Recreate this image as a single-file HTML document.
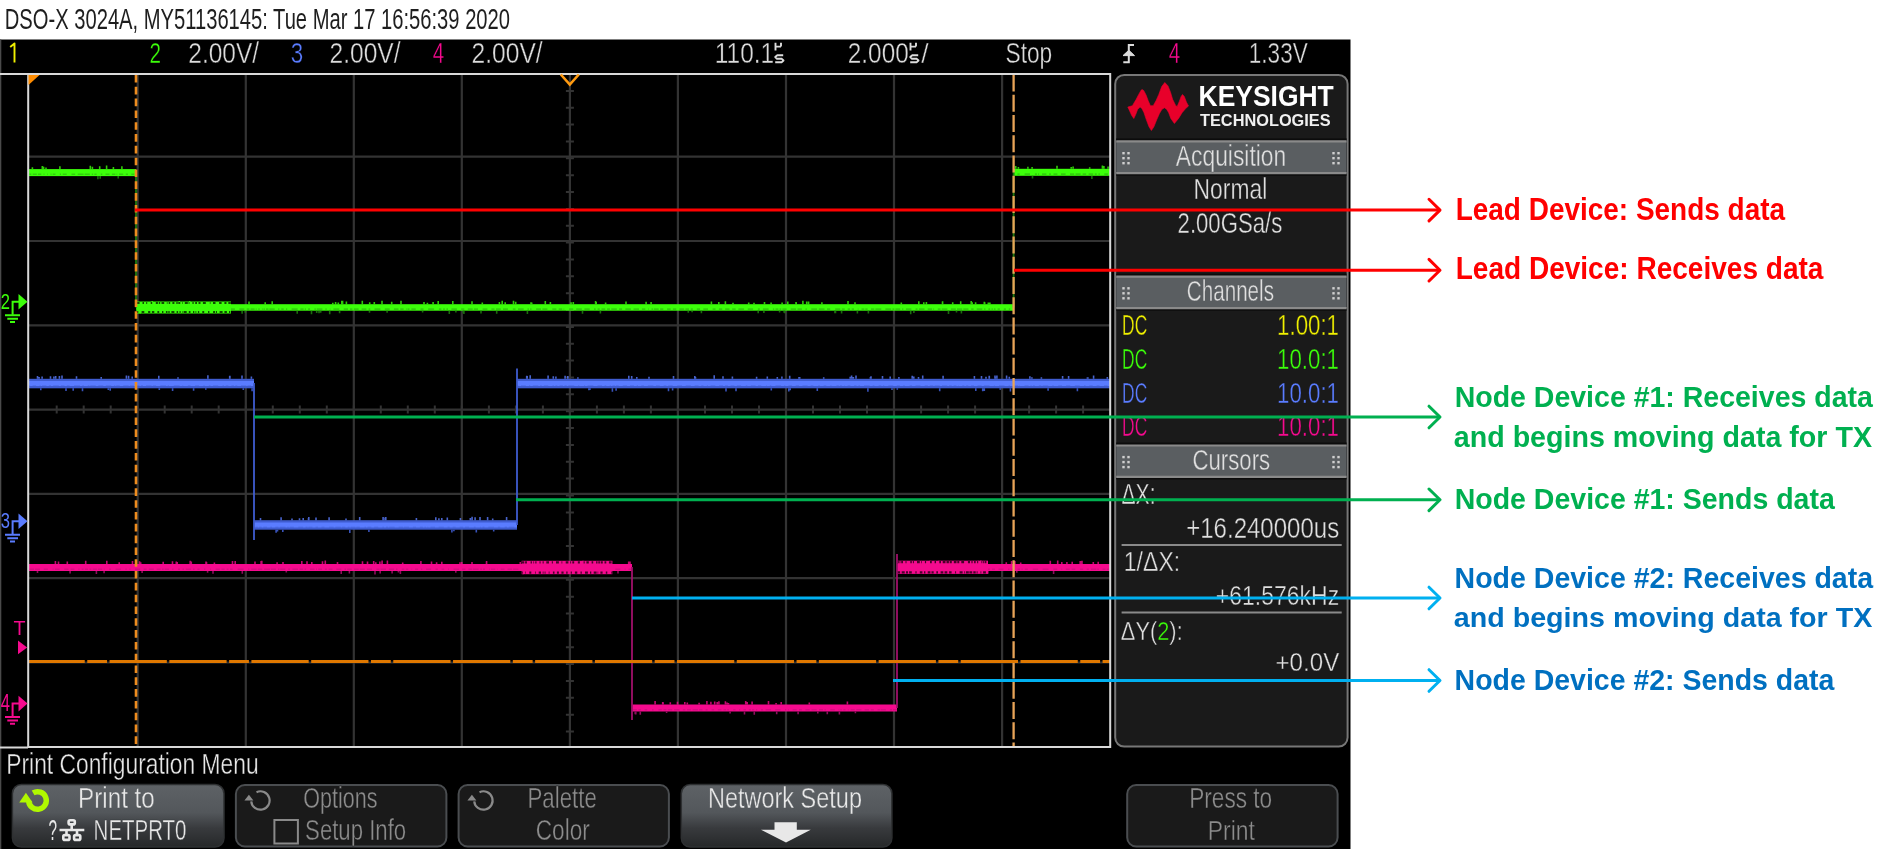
<!DOCTYPE html>
<html><head><meta charset="utf-8"><title>Scope capture</title>
<style>html,body{margin:0;padding:0;background:#fff;width:1883px;height:850px;overflow:hidden}
svg text{font-family:"Liberation Sans",sans-serif} svg{will-change:transform}</style></head>
<body>
<svg width="1883" height="850" viewBox="0 0 1883 850" style="display:block">
<rect x="0" y="0" width="1883" height="850" fill="#ffffff"/>
<text x="4.80" y="29.00" font-size="29.09" font-weight="400" fill="#1e1e1e" textLength="505.19" lengthAdjust="spacingAndGlyphs">DSO-X 3024A, MY51136145: Tue Mar 17 16:56:39 2020</text>
<rect x="0" y="39.5" width="1350.5" height="809.5" fill="#000"/>
<rect x="0" y="39.5" width="1.3" height="809.5" fill="#4a4a4a"/>
<path d="M0,74 H28 M0,747.4 H28" stroke="#d9d9d9" stroke-width="2"/>
<path d="M10.2,47 L14.5,43.4 V62.6" fill="none" stroke="#f0f000" stroke-width="1.9" stroke-linejoin="round"/>
<text x="149.60" y="63.00" font-size="29.39" font-weight="400" fill="#3cff0a" textLength="11.52" lengthAdjust="spacingAndGlyphs" stroke="#000000" stroke-width="0.4">2</text>
<text x="188.30" y="63.00" font-size="29.39" font-weight="400" fill="#dcdcdc" textLength="70.87" lengthAdjust="spacingAndGlyphs" stroke="#000000" stroke-width="0.4">2.00V/</text>
<text x="290.80" y="63.00" font-size="29.39" font-weight="400" fill="#5a7cff" textLength="12.43" lengthAdjust="spacingAndGlyphs" stroke="#000000" stroke-width="0.4">3</text>
<text x="329.60" y="63.00" font-size="29.39" font-weight="400" fill="#dcdcdc" textLength="70.97" lengthAdjust="spacingAndGlyphs" stroke="#000000" stroke-width="0.4">2.00V/</text>
<text x="432.80" y="63.00" font-size="29.82" font-weight="400" fill="#f50a8e" textLength="11.42" lengthAdjust="spacingAndGlyphs" stroke="#000000" stroke-width="0.4">4</text>
<text x="471.60" y="63.00" font-size="29.39" font-weight="400" fill="#dcdcdc" textLength="71.07" lengthAdjust="spacingAndGlyphs" stroke="#000000" stroke-width="0.4">2.00V/</text>
<text x="714.80" y="63.00" font-size="29.39" font-weight="400" fill="#dcdcdc" textLength="59.42" lengthAdjust="spacingAndGlyphs" stroke="#000000" stroke-width="0.4">110.1</text>
<text x="847.80" y="63.00" font-size="29.39" font-weight="400" fill="#dcdcdc" textLength="60.90" lengthAdjust="spacingAndGlyphs" stroke="#000000" stroke-width="0.4">2.000</text>
<path d="M775.5,42.8 V50.4 M775.5,46.6 H781.0 M781.0,42.8 V46.6 M783.2,55.3 H777.3 L775.2,57 L777.0,58.8 H781.8 L783.5,60.5 L781.8,62.2 H775.2" fill="none" stroke="#dcdcdc" stroke-width="1.9" stroke-linejoin="round"/>
<path d="M910.5,42.8 V50.4 M910.5,46.6 H916.0 M916.0,42.8 V46.6 M918.2,55.3 H912.3 L910.2,57 L912.0,58.8 H916.8 L918.5,60.5 L916.8,62.2 H910.2" fill="none" stroke="#dcdcdc" stroke-width="1.9" stroke-linejoin="round"/>
<text x="921.30" y="63.00" font-size="28.28" font-weight="400" fill="#dcdcdc" textLength="7.34" lengthAdjust="spacingAndGlyphs" stroke="#000000" stroke-width="0.4">/</text>
<text x="1005.50" y="63.00" font-size="29.39" font-weight="400" fill="#dcdcdc" textLength="46.69" lengthAdjust="spacingAndGlyphs" stroke="#000000" stroke-width="0.4">Stop</text>
<path d="M1123.3,62.2 H1128.8 V45 H1134" fill="none" stroke="#dcdcdc" stroke-width="2"/>
<path d="M1123,55.6 L1128.8,50.2 L1134.5,55.6 Z" fill="#dcdcdc" stroke="#dcdcdc" stroke-width="1"/>
<text x="1168.80" y="63.00" font-size="29.82" font-weight="400" fill="#f50a8e" textLength="11.42" lengthAdjust="spacingAndGlyphs" stroke="#000000" stroke-width="0.4">4</text>
<text x="1248.80" y="63.00" font-size="29.82" font-weight="400" fill="#dcdcdc" textLength="58.92" lengthAdjust="spacingAndGlyphs" stroke="#000000" stroke-width="0.4">1.33V</text>
<path d="M137.7,75 V746 M245.8,75 V746 M353.8,75 V746 M461.8,75 V746 M569.9,75 V746 M677.9,75 V746 M786.0,75 V746 M894.0,75 V746 M1002.1,75 V746 M29,156.7 H1110 M29,241.0 H1110 M29,325.3 H1110 M29,409.6 H1110 M29,493.9 H1110 M29,578.2 H1110 M29,662.5 H1110" stroke="#333333" stroke-width="2.2" fill="none"/>
<path d="M565.9,90.9 H573.9 M565.9,107.7 H573.9 M565.9,124.6 H573.9 M565.9,141.4 H573.9 M565.9,158.3 H573.9 M565.9,175.2 H573.9 M565.9,192.0 H573.9 M565.9,208.9 H573.9 M565.9,225.7 H573.9 M565.9,242.6 H573.9 M565.9,259.5 H573.9 M565.9,276.3 H573.9 M565.9,293.2 H573.9 M565.9,310.0 H573.9 M565.9,326.9 H573.9 M565.9,343.8 H573.9 M565.9,360.6 H573.9 M565.9,377.5 H573.9 M565.9,394.3 H573.9 M565.9,411.2 H573.9 M565.9,428.1 H573.9 M565.9,444.9 H573.9 M565.9,461.8 H573.9 M565.9,478.6 H573.9 M565.9,495.5 H573.9 M565.9,512.4 H573.9 M565.9,529.2 H573.9 M565.9,546.1 H573.9 M565.9,562.9 H573.9 M565.9,579.8 H573.9 M565.9,596.7 H573.9 M565.9,613.5 H573.9 M565.9,630.4 H573.9 M565.9,647.2 H573.9 M565.9,664.1 H573.9 M565.9,681.0 H573.9 M565.9,697.8 H573.9 M565.9,714.7 H573.9 M565.9,731.5 H573.9 M56.7,405.6 V413.6 M83.7,405.6 V413.6 M110.7,405.6 V413.6 M137.7,405.6 V413.6 M164.7,405.6 V413.6 M191.7,405.6 V413.6 M218.7,405.6 V413.6 M245.8,405.6 V413.6 M272.8,405.6 V413.6 M299.8,405.6 V413.6 M326.8,405.6 V413.6 M353.8,405.6 V413.6 M380.8,405.6 V413.6 M407.8,405.6 V413.6 M434.8,405.6 V413.6 M461.8,405.6 V413.6 M488.9,405.6 V413.6 M515.9,405.6 V413.6 M542.9,405.6 V413.6 M569.9,405.6 V413.6 M596.9,405.6 V413.6 M623.9,405.6 V413.6 M650.9,405.6 V413.6 M677.9,405.6 V413.6 M705.0,405.6 V413.6 M732.0,405.6 V413.6 M759.0,405.6 V413.6 M786.0,405.6 V413.6 M813.0,405.6 V413.6 M840.0,405.6 V413.6 M867.0,405.6 V413.6 M894.0,405.6 V413.6 M921.1,405.6 V413.6 M948.1,405.6 V413.6 M975.1,405.6 V413.6 M1002.1,405.6 V413.6 M1029.1,405.6 V413.6 M1056.1,405.6 V413.6 M1083.1,405.6 V413.6" stroke="#333333" stroke-width="2" fill="none"/>
<rect x="29.0" y="169.1" width="107.0" height="7.0" fill="#3cff0a"/><path d="M29.0,174.3 H136.0" stroke="#1f7a10" stroke-width="1.6" stroke-dasharray="2.3 1.4 4.1 1.1 3.4 2.3 0.8 2.9 0.7 2.6 0.9 1.2 2.8 4.3 1.2 1.7 4.0 4.8 3.7 2.5 5.9 1.0 5.2 2.0 1.3 1.3 2.2 4.2 1.5 3.2 4.0 2.4 3.5 1.1 0.8 1.7 4.2 2.6 2.2 3.3 3.0 2.1" opacity="0.35"/><path d="M113.4,169.1 v-2.0 M90.3,169.1 v-3.3 M106.6,169.1 v-3.5 M42.4,169.1 v-3.0 M46.0,169.1 v-1.6 M121.9,169.1 v-2.9 M92.4,169.1 v-2.4 M99.7,169.1 v-2.9 M59.9,169.1 v-2.8 M32.4,169.1 v-1.8 M42.3,169.1 v-3.0 M43.6,169.1 v-2.3" stroke="#3cff0a" stroke-width="1.6" opacity="0.8"/><path d="M100.2,176.1 v2.6 M118.2,176.1 v2.4 M97.9,176.1 v3.1" stroke="#1f7a10" stroke-width="1.6" opacity="0.9"/><rect x="136.0" y="304.2" width="877.6" height="6.5" fill="#3cff0a"/><path d="M136.0,309.1 H1013.6" stroke="#1f7a10" stroke-width="1.6" stroke-dasharray="5.3 1.1 3.0 3.1 5.4 4.2 5.3 2.0 2.8 2.3 5.4 4.8 1.3 1.5 1.8 1.8 3.2 3.3 1.9 0.8 2.8 2.4 3.6 4.8 4.3 3.0 3.9 3.6 0.8 4.6 4.8 4.5 4.9 2.4 2.7 1.2 4.0 1.1 0.9 1.7 1.4 2.2 0.8 0.8 1.3 1.2 2.5 0.9 5.3 3.4 1.3 1.9 2.4 2.3 1.2 4.4 6.0 2.8 3.2 1.2 1.1 2.2 2.0 4.3 1.4 0.9 5.7 3.0 1.3 3.1 0.6 3.0 5.9 4.4 4.3 1.9 2.5 1.5 4.7 3.0 4.8 2.2 1.7 4.2 5.9 4.4 4.9 4.2 4.6 1.8 3.3 2.3 0.7 0.9 2.0 1.9 4.3 4.8 3.0 4.7 5.9 4.8 2.5 1.7 1.7 1.6 1.6 3.4 5.5 4.3 3.1 3.5 4.9 1.2 4.1 4.6 4.8 4.0 3.1 1.5 4.8 2.2 4.9 4.9 2.7 2.5 5.7 3.8 1.4 1.3 1.3 4.6 4.9 1.4 5.0 4.9 4.1 2.3 3.5 1.4 0.6 4.9 4.1 3.0 5.6 2.6 5.3 4.3 1.7 1.9 2.1 1.8 3.7 1.9 2.8 1.4 5.5 2.3 3.0 3.3 5.5 2.6 5.5 2.9 3.4 3.0 0.6 2.6 1.5 0.8 4.9 1.5 3.1 3.8 3.6 2.2 3.4 3.1 4.8 1.2 3.6 1.8 2.0 4.0 3.3 3.2 4.7 4.6 2.9 3.4 3.3 3.0 4.3 2.7 3.4 2.8 5.7 3.7 5.3 4.8 1.9 3.1 5.7 4.3 1.3 1.3 2.9 1.1 1.8 1.1 4.2 4.1 5.4 1.4 4.4 3.6 1.3 4.5 5.8 1.7 5.7 2.5 3.2 5.0 5.1 1.5 2.9 3.0 2.4 1.6 2.3 3.8 0.6 3.1 2.9 0.9 2.3 3.4 3.3 1.1 5.9 4.1 5.8 1.2 2.0 1.0 4.8 1.9 1.2 2.6 5.5 4.2 1.9 1.4 5.6 3.2 4.4 1.2 0.8 3.7 2.8 1.1 5.7 3.5 4.9 1.2 5.2 1.1 5.2 2.7 2.4 3.1 5.6 1.9 1.2 3.0 1.8 1.3 1.4 1.0 1.6 2.1 2.2 4.0 2.1 2.9 1.5 2.3 0.6 1.9 0.6 3.9 3.5 1.6 3.1 4.7 1.1 4.2 2.9 2.9 5.1 2.5 3.3 3.7 5.9 2.2 5.1 3.8 4.0 2.5 2.4 1.0 1.2 1.1 4.6 1.9 1.4 1.2 5.1 4.5 4.2 2.0 1.8 2.0 3.0 1.5 3.0 1.9 5.8 4.9 3.5 1.8 5.8 2.1 2.5 0.8 2.6 2.8 3.3 1.6 3.3 0.8 2.0 1.2 2.7 1.0 0.6 2.1 1.8 3.3" opacity="0.35"/><path d="M771.1,304.2 v-1.6 M595.6,304.2 v-3.2 M918.8,304.2 v-2.9 M338.3,304.2 v-1.8 M452.8,304.2 v-3.2 M626.0,304.2 v-2.8 M733.0,304.2 v-1.5 M605.6,304.2 v-1.6 M782.1,304.2 v-1.6 M472.0,304.2 v-2.9 M808.6,304.2 v-2.8 M204.8,304.2 v-2.0 M787.8,304.2 v-2.6 M147.9,304.2 v-2.0 M725.4,304.2 v-2.9 M391.7,304.2 v-2.4 M545.3,304.2 v-3.3 M152.3,304.2 v-3.1 M984.7,304.2 v-2.0 M646.1,304.2 v-2.5 M971.2,304.2 v-3.1 M158.7,304.2 v-2.5 M531.7,304.2 v-1.8 M438.2,304.2 v-3.2 M926.4,304.2 v-2.2 M452.8,304.2 v-2.1 M179.3,304.2 v-3.2 M369.7,304.2 v-1.9 M848.0,304.2 v-3.3 M960.7,304.2 v-2.9 M796.0,304.2 v-2.1 M550.4,304.2 v-2.1 M711.4,304.2 v-2.6 M482.3,304.2 v-1.8 M531.0,304.2 v-1.9 M216.4,304.2 v-1.7 M346.4,304.2 v-2.6 M499.4,304.2 v-2.3 M433.1,304.2 v-2.1 M984.3,304.2 v-2.5 M374.3,304.2 v-2.3 M901.3,304.2 v-1.6 M651.1,304.2 v-2.3 M988.3,304.2 v-1.7 M272.2,304.2 v-2.9 M806.7,304.2 v-2.6 M942.5,304.2 v-2.1 M249.0,304.2 v-2.8 M748.7,304.2 v-1.6 M596.2,304.2 v-2.3 M332.8,304.2 v-1.5 M401.0,304.2 v-3.4 M342.6,304.2 v-3.4 M754.0,304.2 v-1.5 M573.3,304.2 v-2.3 M362.3,304.2 v-3.4 M335.6,304.2 v-2.2 M505.2,304.2 v-1.9 M855.0,304.2 v-1.9 M802.9,304.2 v-3.4 M571.1,304.2 v-1.9 M502.2,304.2 v-3.4 M265.2,304.2 v-1.9 M989.9,304.2 v-1.6 M189.7,304.2 v-3.3 M952.7,304.2 v-1.9 M718.8,304.2 v-2.2 M427.4,304.2 v-1.5 M382.0,304.2 v-3.4 M515.7,304.2 v-2.4 M172.6,304.2 v-1.6 M942.6,304.2 v-3.0 M923.8,304.2 v-2.0 M975.6,304.2 v-2.0 M764.5,304.2 v-2.1 M341.8,304.2 v-3.4 M972.2,304.2 v-2.0 M513.5,304.2 v-3.4 M424.0,304.2 v-2.2 M821.9,304.2 v-1.9 M796.2,304.2 v-1.6" stroke="#3cff0a" stroke-width="1.6" opacity="0.8"/><path d="M600.4,310.8 v2.8 M763.9,310.8 v2.3 M422.6,310.8 v1.8 M868.4,310.8 v2.8 M779.6,310.8 v1.8 M841.6,310.8 v2.7 M835.5,310.8 v2.5 M369.5,310.8 v1.9 M784.8,310.8 v2.5 M311.5,310.8 v3.4 M320.7,310.8 v1.9 M582.5,310.8 v2.9 M339.6,310.8 v2.5 M138.5,310.8 v3.2 M242.1,310.8 v2.9 M481.0,310.8 v2.7 M387.1,310.8 v2.0 M463.9,310.8 v3.3 M180.3,310.8 v2.4 M179.9,310.8 v1.8 M784.1,310.8 v2.0 M319.0,310.8 v2.5 M329.7,310.8 v3.5 M913.9,310.8 v2.3 M688.3,310.8 v1.9 M527.4,310.8 v3.2 M758.2,310.8 v2.4 M948.5,310.8 v3.2 M961.4,310.8 v2.8 M171.6,310.8 v2.0 M701.4,310.8 v2.5 M834.9,310.8 v2.5 M316.7,310.8 v2.1 M910.7,310.8 v3.5 M956.5,310.8 v1.6 M245.3,310.8 v1.9 M449.3,310.8 v3.1 M463.3,310.8 v1.9 M455.9,310.8 v1.6 M496.7,310.8 v3.0 M140.3,310.8 v3.3 M692.1,310.8 v1.5 M297.2,310.8 v3.0 M857.4,310.8 v2.7" stroke="#1f7a10" stroke-width="1.6" opacity="0.9"/><rect x="1013.6" y="168.8" width="96.4" height="7.0" fill="#3cff0a"/><path d="M1013.6,174.1 H1110.0" stroke="#1f7a10" stroke-width="1.6" stroke-dasharray="0.7 3.1 2.3 4.9 5.4 4.9 2.0 1.2 1.0 2.9 4.4 2.7 1.8 2.6 3.9 3.6 4.6 4.4 4.2 1.3 5.1 2.0 3.6 2.4 4.6 1.6 1.9 1.8 1.3 4.5 3.7 2.2 2.7 5.0 3.3 1.8 4.9 3.5" opacity="0.35"/><path d="M1108.1,168.8 v-2.4 M1018.4,168.8 v-1.7 M1102.4,168.8 v-3.2 M1057.0,168.8 v-3.1 M1103.9,168.8 v-2.7 M1073.1,168.8 v-2.2 M1027.9,168.8 v-2.0 M1071.2,168.8 v-1.9 M1015.7,168.8 v-2.9 M1032.1,168.8 v-1.9 M1089.7,168.8 v-1.6" stroke="#3cff0a" stroke-width="1.6" opacity="0.8"/><path d="M1091.9,175.8 v3.3 M1032.5,175.8 v2.7" stroke="#1f7a10" stroke-width="1.6" opacity="0.9"/><path d="M136.0,172.0 V307.5" stroke="#1f7a10" stroke-width="1.8"/><path d="M1013.6,172.0 V307.5" stroke="#1f7a10" stroke-width="1.8"/>
<rect x="29.0" y="378.8" width="225.0" height="9.5" fill="#3f5cd0"/><rect x="29.0" y="381.0" width="225.0" height="5.0" fill="#5a7cff"/><path d="M29.0,385.9 H254.0" stroke="#3f5cd0" stroke-width="1.6" stroke-dasharray="1.1 2.5 3.5 3.5 1.0 1.5 4.3 2.5 2.1 2.1 5.7 2.1 3.6 2.3 2.8 4.4 6.0 2.3 1.6 3.9 1.6 0.8 5.5 2.6 5.0 2.5 5.4 2.7 1.4 0.9 3.5 3.5 5.5 1.2 3.9 2.4 3.3 1.4 2.1 3.0 5.6 1.3 3.2 4.2 5.8 1.6 1.2 4.8 5.9 2.8 0.8 4.7 2.6 4.6 3.9 4.3 1.4 4.1 1.7 2.5 5.2 4.3 1.5 1.7 2.7 3.0 2.6 1.3 1.9 3.8 5.4 1.0 3.6 4.0 0.7 4.3 1.1 3.3 3.5 3.4 2.2 2.6 3.7 2.6 4.1 2.7 2.9 0.9 3.9 2.9" opacity="0.35"/><path d="M132.2,378.8 v-2.4 M53.9,378.8 v-2.4 M50.5,378.8 v-2.5 M39.1,378.8 v-1.7 M42.1,378.8 v-2.3 M242.0,378.8 v-3.2 M229.9,378.8 v-3.1 M62.0,378.8 v-3.3 M76.5,378.8 v-2.5 M101.2,378.8 v-1.9 M229.7,378.8 v-3.1 M55.7,378.8 v-2.8 M251.4,378.8 v-2.3 M207.9,378.8 v-3.5 M158.8,378.8 v-3.0 M128.6,378.8 v-3.0 M178.0,378.8 v-1.5 M37.5,378.8 v-2.7 M126.4,378.8 v-3.3 M59.4,378.8 v-2.8" stroke="#5a7cff" stroke-width="1.6" opacity="0.8"/><path d="M82.5,388.2 v3.1 M193.6,388.2 v2.5 M252.1,388.2 v3.1 M73.2,388.2 v2.5 M243.3,388.2 v1.8 M205.8,388.2 v1.6 M108.3,388.2 v1.8 M66.0,388.2 v2.9 M110.2,388.2 v2.6 M159.3,388.2 v1.7 M40.8,388.2 v2.0 M172.6,388.2 v2.7" stroke="#3f5cd0" stroke-width="1.6" opacity="0.9"/><rect x="254.0" y="520.2" width="263.0" height="9.5" fill="#3f5cd0"/><rect x="254.0" y="522.5" width="263.0" height="5.0" fill="#5a7cff"/><path d="M254.0,527.4 H517.0" stroke="#3f5cd0" stroke-width="1.6" stroke-dasharray="0.6 0.8 2.5 1.2 2.5 1.7 3.7 3.3 1.6 3.4 3.1 1.4 5.7 1.8 1.3 1.2 4.0 4.5 4.8 2.5 2.0 0.8 4.0 3.2 2.4 3.5 2.9 4.7 4.5 1.8 5.5 1.0 3.4 2.5 1.8 1.0 4.8 0.9 3.5 4.8 1.3 1.6 3.8 2.9 4.0 4.2 1.5 2.1 2.2 1.0 5.4 4.1 4.4 0.8 5.1 3.9 3.1 3.9 3.0 1.7 1.1 1.8 0.7 2.2 4.6 3.7 5.1 3.8 2.0 3.1 2.9 4.1 3.4 1.9 4.0 4.9 1.7 4.5 0.6 1.9 1.8 3.9 5.7 3.9 2.3 4.5 2.3 1.8 5.5 3.4 4.3 3.6 5.9 2.8 5.1 3.7 5.2 2.6 4.5 3.2 2.2 1.7 3.9 1.1" opacity="0.35"/><path d="M492.7,520.2 v-1.6 M292.0,520.2 v-1.6 M435.8,520.2 v-2.9 M447.3,520.2 v-2.7 M487.6,520.2 v-3.2 M308.7,520.2 v-1.6 M470.3,520.2 v-2.1 M281.1,520.2 v-3.0 M308.5,520.2 v-2.3 M260.5,520.2 v-2.1 M441.8,520.2 v-2.1 M506.6,520.2 v-3.2 M416.4,520.2 v-2.3 M438.9,520.2 v-1.9 M480.0,520.2 v-3.1 M299.5,520.2 v-1.9 M383.1,520.2 v-3.1 M303.2,520.2 v-2.2 M472.1,520.2 v-3.4 M329.1,520.2 v-2.9 M385.1,520.2 v-2.8 M460.4,520.2 v-2.2 M359.7,520.2 v-3.3 M308.8,520.2 v-3.3 M385.8,520.2 v-3.3 M316.0,520.2 v-2.6 M346.0,520.2 v-1.8 M475.1,520.2 v-3.0" stroke="#5a7cff" stroke-width="1.6" opacity="0.8"/><path d="M282.8,529.8 v2.2 M349.8,529.8 v3.1 M493.7,529.8 v1.7 M476.3,529.8 v2.8 M368.9,529.8 v2.2 M453.9,529.8 v1.5 M276.1,529.8 v2.9 M277.5,529.8 v1.6 M451.9,529.8 v2.8" stroke="#3f5cd0" stroke-width="1.6" opacity="0.9"/><rect x="517.0" y="378.8" width="593.0" height="9.5" fill="#3f5cd0"/><rect x="517.0" y="381.0" width="593.0" height="5.0" fill="#5a7cff"/><path d="M517.0,385.9 H1110.0" stroke="#3f5cd0" stroke-width="1.6" stroke-dasharray="1.4 2.6 4.8 3.2 1.2 2.7 5.4 1.8 1.6 2.1 4.4 4.3 1.4 1.5 1.9 2.2 3.4 1.5 2.3 1.6 5.9 3.9 1.1 4.8 1.1 2.4 5.9 4.1 4.5 2.6 1.6 3.5 1.1 1.7 2.6 0.9 2.7 4.1 4.3 2.9 4.0 2.7 1.3 3.3 2.7 3.9 5.5 2.6 3.7 3.9 2.8 1.8 4.5 4.5 4.8 3.7 5.2 3.7 4.0 2.7 2.2 3.4 1.0 2.6 4.8 3.8 4.0 1.9 2.8 2.7 3.9 2.5 4.2 4.7 1.5 3.5 4.8 2.4 3.2 4.9 0.7 3.1 1.4 4.1 5.7 3.0 1.1 3.2 3.5 3.8 3.3 3.5 5.1 3.0 2.8 4.8 1.7 3.7 2.7 4.0 1.2 4.9 2.5 1.0 2.0 2.5 0.6 2.6 2.8 3.7 2.4 1.9 1.7 3.9 5.7 3.0 1.7 4.2 2.7 1.7 1.2 4.1 5.0 3.5 3.1 3.2 1.7 4.8 2.4 3.5 5.0 4.2 3.1 2.0 3.5 1.3 5.1 2.3 5.2 1.9 2.6 1.9 2.8 1.6 0.5 3.8 2.0 1.8 2.2 2.8 2.9 3.5 4.1 2.3 5.6 4.4 0.8 4.3 5.5 4.1 1.3 4.3 4.0 0.9 0.6 4.8 4.1 1.9 1.1 1.4 1.8 4.1 2.4 1.4 5.5 4.1 1.4 4.5 3.8 4.1 4.2 4.6 4.8 4.3 1.6 3.7 3.4 3.9 2.9 4.5 3.6 1.9 1.8 1.4 3.2 1.0 3.1 1.4 3.2 2.9 3.5 4.4 0.5 4.3 3.1 3.2 4.2 4.3 2.6 2.6 5.8 1.1 4.0 3.5 0.7 3.4 4.3 4.7 2.3 4.9 3.3 2.8 5.4 0.9 4.5 3.4 2.4 4.4 2.5 2.8 3.4 4.0 1.7 2.6 2.8 3.1" opacity="0.35"/><path d="M1006.6,378.8 v-3.2 M756.6,378.8 v-2.0 M986.0,378.8 v-2.1 M694.8,378.8 v-2.8 M981.5,378.8 v-2.9 M1041.4,378.8 v-1.6 M695.5,378.8 v-1.9 M1062.6,378.8 v-2.8 M882.5,378.8 v-2.9 M870.4,378.8 v-1.9 M912.2,378.8 v-3.0 M577.9,378.8 v-1.6 M850.2,378.8 v-2.1 M767.3,378.8 v-2.4 M853.4,378.8 v-1.7 M996.9,378.8 v-3.3 M781.9,378.8 v-2.3 M799.0,378.8 v-1.7 M898.9,378.8 v-1.8 M527.2,378.8 v-2.9 M1031.9,378.8 v-1.5 M943.1,378.8 v-3.0 M628.8,378.8 v-3.0 M567.8,378.8 v-2.9 M1087.9,378.8 v-1.5 M526.7,378.8 v-3.1 M565.1,378.8 v-3.0 M553.3,378.8 v-2.6 M777.3,378.8 v-1.8 M989.2,378.8 v-2.8 M890.2,378.8 v-2.3 M853.0,378.8 v-1.6 M1093.6,378.8 v-3.2 M714.2,378.8 v-3.5 M1009.3,378.8 v-2.1 M922.7,378.8 v-3.3 M995.2,378.8 v-1.5 M673.5,378.8 v-2.7 M856.0,378.8 v-3.2 M995.0,378.8 v-3.3 M723.0,378.8 v-2.6 M989.3,378.8 v-3.0 M1068.6,378.8 v-2.7 M918.5,378.8 v-1.9 M789.7,378.8 v-3.1 M974.4,378.8 v-2.7 M799.7,378.8 v-1.9 M631.7,378.8 v-2.9 M732.4,378.8 v-2.3 M823.7,378.8 v-1.6 M1107.3,378.8 v-1.7 M871.0,378.8 v-2.5 M530.2,378.8 v-3.5 M1029.9,378.8 v-2.6 M1087.4,378.8 v-1.6 M636.8,378.8 v-1.7 M548.1,378.8 v-3.2 M555.9,378.8 v-2.3 M851.6,378.8 v-3.4 M913.8,378.8 v-2.4 M649.0,378.8 v-2.0" stroke="#5a7cff" stroke-width="1.6" opacity="0.8"/><path d="M817.3,388.2 v2.8 M984.3,388.2 v2.7 M975.8,388.2 v2.8 M736.0,388.2 v3.1 M897.3,388.2 v1.6 M867.9,388.2 v3.5 M589.9,388.2 v1.7 M939.7,388.2 v3.0 M790.2,388.2 v2.0 M616.1,388.2 v2.5 M982.7,388.2 v3.1 M771.3,388.2 v2.3 M1000.2,388.2 v1.6 M1010.4,388.2 v3.2 M668.5,388.2 v3.1 M1048.1,388.2 v2.5 M892.0,388.2 v1.8 M672.6,388.2 v2.4 M1077.4,388.2 v3.1 M788.8,388.2 v3.3 M588.9,388.2 v2.0 M612.4,388.2 v3.5 M726.0,388.2 v3.3" stroke="#3f5cd0" stroke-width="1.6" opacity="0.9"/><path d="M254.0,383.0 V540.0" stroke="#3f5cd0" stroke-width="1.8"/><path d="M517.0,368.5 V525.0" stroke="#3f5cd0" stroke-width="1.8"/>
<rect x="29.0" y="564.0" width="603.0" height="7.0" fill="#f50a8e"/><path d="M29.0,569.2 H632.0" stroke="#a0106a" stroke-width="1.6" stroke-dasharray="5.1 1.0 4.8 3.8 4.1 4.9 0.8 1.4 4.7 4.7 4.2 2.1 3.8 4.0 1.1 2.2 1.9 1.3 3.1 1.5 1.8 1.4 4.2 0.9 4.4 1.6 0.7 4.7 1.7 4.7 5.3 4.5 1.3 2.7 1.0 4.7 5.1 3.4 3.0 2.2 5.0 2.8 4.0 1.4 1.7 1.0 4.4 3.1 1.3 4.5 2.0 2.5 1.4 1.9 5.1 2.2 1.4 2.9 2.2 4.6 1.1 4.9 0.8 4.6 4.2 1.7 3.1 2.0 1.9 1.6 2.5 5.0 6.0 4.7 1.0 2.0 5.4 1.0 4.5 2.0 5.9 0.9 4.9 2.2 1.3 0.8 5.1 3.0 1.5 2.6 5.5 1.7 3.6 1.4 1.5 4.0 4.4 1.6 0.9 1.2 3.8 2.9 2.0 1.7 3.9 3.8 5.0 3.2 1.6 1.1 4.5 2.5 4.5 1.0 5.0 2.2 5.1 4.4 3.2 0.9 5.5 2.8 5.3 1.9 1.5 4.3 2.5 1.5 2.5 3.3 0.5 3.0 3.0 3.0 1.2 3.8 5.0 4.4 2.3 3.8 2.6 4.0 0.8 4.5 5.7 2.9 3.3 3.0 3.5 0.9 5.8 1.7 1.5 1.2 1.9 4.2 0.7 1.2 4.3 1.6 0.6 3.3 3.7 3.0 4.4 1.2 5.3 3.8 0.7 1.3 3.2 2.9 2.0 1.3 2.7 1.4 3.8 4.4 1.3 3.2 4.6 1.5 5.0 4.7 2.6 2.6 5.1 3.0 2.7 4.8 4.8 2.2 1.8 2.2 2.9 4.9 4.9 4.6 5.0 4.4 0.8 3.0 5.8 4.7 1.9 2.6 4.0 2.3 3.4 1.1 2.9 2.9 0.6 1.4 5.8 4.1 5.7 3.5 5.0 4.5 5.4 0.9 4.0 1.9 4.2 1.9 3.5 4.7 3.9 1.9 3.4 2.6 5.7 2.0 2.2 3.5 1.2 3.3 5.8 3.0" opacity="0.35"/><path d="M191.3,564.0 v-2.6 M119.2,564.0 v-1.8 M206.5,564.0 v-2.1 M176.3,564.0 v-2.6 M534.7,564.0 v-2.6 M420.9,564.0 v-2.9 M307.0,564.0 v-2.7 M311.8,564.0 v-2.0 M163.2,564.0 v-2.3 M382.0,564.0 v-2.2 M548.0,564.0 v-2.6 M325.3,564.0 v-3.5 M67.3,564.0 v-2.4 M472.0,564.0 v-2.0 M232.5,564.0 v-2.9 M486.6,564.0 v-3.1 M553.4,564.0 v-3.0 M382.1,564.0 v-3.4 M373.7,564.0 v-3.1 M554.5,564.0 v-2.3 M301.8,564.0 v-2.9 M206.0,564.0 v-2.6 M261.1,564.0 v-3.1 M540.6,564.0 v-2.4 M140.7,564.0 v-1.8 M375.8,564.0 v-1.7 M583.0,564.0 v-3.2 M58.5,564.0 v-2.5 M630.0,564.0 v-2.5 M441.8,564.0 v-2.2 M387.4,564.0 v-3.4 M436.6,564.0 v-1.7 M255.0,564.0 v-2.6 M322.5,564.0 v-2.7 M628.7,564.0 v-2.6 M520.3,564.0 v-2.1 M283.0,564.0 v-2.1 M337.5,564.0 v-1.9 M139.6,564.0 v-2.7 M55.4,564.0 v-3.1 M214.4,564.0 v-1.5 M431.5,564.0 v-2.5 M362.5,564.0 v-2.8 M277.1,564.0 v-1.8 M486.5,564.0 v-1.7 M132.5,564.0 v-3.1 M460.0,564.0 v-1.8 M190.2,564.0 v-3.3 M379.9,564.0 v-2.4 M261.8,564.0 v-3.3 M402.7,564.0 v-1.6 M600.8,564.0 v-2.3 M461.8,564.0 v-2.1 M556.1,564.0 v-3.1 M176.3,564.0 v-2.2 M367.5,564.0 v-2.6 M261.7,564.0 v-1.6 M177.2,564.0 v-2.1 M172.5,564.0 v-2.8 M235.2,564.0 v-2.9 M85.7,564.0 v-3.2 M106.8,564.0 v-3.2" stroke="#f50a8e" stroke-width="1.6" opacity="0.8"/><path d="M207.6,571.0 v1.8 M70.1,571.0 v2.4 M606.5,571.0 v1.8 M400.4,571.0 v3.1 M341.2,571.0 v3.0 M455.8,571.0 v1.8 M533.7,571.0 v1.9 M286.3,571.0 v1.5 M583.1,571.0 v2.6 M375.0,571.0 v3.4 M618.0,571.0 v2.5 M96.4,571.0 v2.9 M523.2,571.0 v3.3 M242.3,571.0 v2.8 M213.0,571.0 v2.7 M349.4,571.0 v2.6 M398.4,571.0 v1.6 M37.5,571.0 v2.1 M380.2,571.0 v2.4 M589.4,571.0 v2.1 M570.2,571.0 v2.1 M392.1,571.0 v2.5 M142.1,571.0 v2.1 M104.1,571.0 v2.2" stroke="#a0106a" stroke-width="1.6" opacity="0.9"/><rect x="632.0" y="704.5" width="265.0" height="7.0" fill="#f50a8e"/><path d="M632.0,709.8 H897.0" stroke="#a0106a" stroke-width="1.6" stroke-dasharray="4.9 1.5 2.4 3.8 2.6 4.8 1.6 4.8 3.3 1.8 3.0 1.3 4.4 1.9 5.4 3.3 2.5 1.8 3.8 1.7 5.3 1.3 3.3 3.1 2.0 4.0 2.6 3.6 3.6 2.1 2.6 1.2 1.5 4.4 2.3 3.6 1.1 3.2 2.5 2.9 2.1 1.1 2.2 1.8 1.2 3.8 2.1 2.5 5.5 4.1 5.4 4.4 1.2 2.0 0.7 3.7 4.1 2.3 2.8 3.6 4.3 1.8 5.2 2.3 4.0 1.6 1.1 4.6 4.5 3.8 0.7 1.0 1.4 1.6 2.2 2.4 0.7 2.1 4.0 1.6 5.1 3.2 4.4 1.9 2.9 3.7 2.4 0.8 5.1 4.1 2.1 1.0 5.2 3.4 0.8 1.8 1.1 4.1 1.7 4.6 4.6 1.2 4.3 2.5 4.6 4.3" opacity="0.35"/><path d="M706.9,704.5 v-3.4 M752.1,704.5 v-2.9 M745.7,704.5 v-3.4 M776.1,704.5 v-1.6 M727.1,704.5 v-1.9 M714.7,704.5 v-2.9 M809.3,704.5 v-2.0 M768.5,704.5 v-3.4 M725.4,704.5 v-3.3 M670.3,704.5 v-2.2 M847.4,704.5 v-3.0 M677.5,704.5 v-2.7 M663.1,704.5 v-2.2 M687.3,704.5 v-2.1 M684.8,704.5 v-2.4 M662.7,704.5 v-2.4 M728.5,704.5 v-1.6 M655.1,704.5 v-3.5 M781.2,704.5 v-2.5 M747.2,704.5 v-2.6 M699.1,704.5 v-1.8 M710.9,704.5 v-2.8 M718.9,704.5 v-3.2 M717.2,704.5 v-2.6" stroke="#f50a8e" stroke-width="1.6" opacity="0.8"/><path d="M744.5,711.5 v2.9 M827.3,711.5 v2.8 M666.6,711.5 v1.6 M817.8,711.5 v2.0 M776.7,711.5 v2.8 M754.3,711.5 v3.2 M635.8,711.5 v3.0 M635.2,711.5 v2.8 M798.1,711.5 v2.8 M640.3,711.5 v3.2 M855.4,711.5 v1.8 M839.4,711.5 v3.0 M730.1,711.5 v2.0" stroke="#a0106a" stroke-width="1.6" opacity="0.9"/><rect x="897.0" y="564.0" width="213.0" height="7.0" fill="#f50a8e"/><path d="M897.0,569.2 H1110.0" stroke="#a0106a" stroke-width="1.6" stroke-dasharray="0.7 3.2 4.0 4.2 4.4 4.6 5.7 2.9 3.2 1.5 2.1 3.2 0.9 3.7 1.4 2.7 5.8 1.2 0.7 2.6 1.5 3.8 0.5 4.3 5.2 4.1 2.8 2.0 4.1 3.0 2.8 2.2 2.9 3.6 5.0 4.6 1.4 2.0 2.9 3.2 2.4 1.6 1.0 2.2 3.0 4.9 5.5 4.4 5.9 4.8 3.9 4.2 0.8 3.6 3.9 2.0 3.6 4.8 3.1 3.5 2.1 2.2 5.4 0.9 1.5 3.7 3.0 1.2 4.1 2.4 3.7 2.5 3.4 3.2 2.7 1.3 1.5 4.5 3.5 1.3 5.2 1.9 1.0 3.0" opacity="0.35"/><path d="M951.1,564.0 v-2.6 M945.8,564.0 v-1.7 M1006.3,564.0 v-1.7 M984.1,564.0 v-2.4 M1080.2,564.0 v-2.9 M1057.7,564.0 v-3.5 M1050.3,564.0 v-3.2 M980.7,564.0 v-3.4 M1061.8,564.0 v-2.0 M976.6,564.0 v-2.7 M943.0,564.0 v-2.9 M1082.0,564.0 v-3.3 M1081.7,564.0 v-3.0 M1072.2,564.0 v-2.2 M907.2,564.0 v-1.7 M1093.3,564.0 v-2.0 M938.8,564.0 v-3.2 M1020.7,564.0 v-1.5 M1014.9,564.0 v-2.9 M978.4,564.0 v-3.3 M1011.6,564.0 v-3.1 M1098.2,564.0 v-2.2 M929.8,564.0 v-3.2 M1066.9,564.0 v-1.9" stroke="#f50a8e" stroke-width="1.6" opacity="0.8"/><path d="M1016.8,571.0 v1.8 M987.9,571.0 v2.7 M970.0,571.0 v2.9 M1053.6,571.0 v2.9 M1013.8,571.0 v1.7 M921.3,571.0 v1.9" stroke="#a0106a" stroke-width="1.6" opacity="0.9"/><path d="M632.0,567.0 V720.0" stroke="#a0106a" stroke-width="1.8"/><path d="M897.0,554.0 V708.0" stroke="#a0106a" stroke-width="1.8"/>
<rect x="137.0" y="301.5" width="94.0" height="12.0" fill="#3cff0a"/><path d="M137.0,303.0 H231.0" stroke="#000" stroke-width="2.2" stroke-dasharray="2.6 2.9 1.5 2.2 1.0 3.5 1.5 3.6 2.1 0.9 1.4 1.3 2.7 2.6 0.7 1.2 1.5 2.2 2.0 1.9 1.4 0.6 2.0 1.7 0.6 2.2 3.0 0.8 0.9 2.9 1.3 1.5 1.8 1.5 2.0 2.4 2.9 4.0 0.7 2.5 2.5 3.6 2.5 2.8 2.1 1.8" opacity="0.7"/><path d="M137.0,312.0 H231.0" stroke="#000" stroke-width="2.2" stroke-dasharray="1.3 3.3 2.7 3.8 2.2 1.6 2.4 3.1 1.8 2.8 1.4 2.5 1.6 0.8 1.4 1.7 3.0 2.2 1.5 1.4 1.2 1.8 0.9 0.6 2.7 2.1 1.7 2.5 1.3 1.2 0.8 1.6 1.3 3.1 1.9 3.8 1.4 3.7 2.0 0.9 1.0 2.6 3.0 1.8 2.5 2.1" opacity="0.7"/>
<rect x="521.6" y="560.8" width="90.8" height="13.4" fill="#f50a8e"/><path d="M521.6,562.3 H612.4" stroke="#000" stroke-width="2.2" stroke-dasharray="2.7 0.8 1.8 3.7 1.3 1.5 0.7 1.2 1.2 3.0 1.1 2.0 1.1 2.6 2.7 2.8 1.1 3.1 2.9 2.6 0.8 3.4 2.7 1.8 0.9 1.2 1.9 3.6 2.1 3.7 1.1 1.7 2.4 2.8 1.6 2.9 1.4 0.8 1.6 0.8 2.1 1.7 1.8 2.6" opacity="0.7"/><path d="M521.6,572.7 H612.4" stroke="#000" stroke-width="2.2" stroke-dasharray="1.2 2.2 0.6 3.7 2.0 4.0 0.7 2.7 2.3 1.7 0.8 1.1 0.9 3.2 0.8 3.4 1.6 2.4 2.0 2.5 2.2 2.6 1.4 3.1 1.2 3.0 2.4 3.2 1.3 3.2 2.9 2.1 1.3 2.4 2.9 1.0 0.6 2.2 2.2 3.2 1.5 4.0 1.1 3.2" opacity="0.7"/>
<rect x="898.0" y="560.7" width="90.0" height="13.2" fill="#f50a8e"/><path d="M898.0,562.2 H988.0" stroke="#000" stroke-width="2.2" stroke-dasharray="0.8 0.7 0.9 0.8 1.8 2.5 1.0 3.8 1.5 1.1 1.0 3.1 2.8 1.2 0.7 3.2 1.2 3.9 1.8 2.8 1.4 3.3 1.7 1.7 2.8 1.0 2.4 0.8 2.1 2.0 2.7 0.8 2.0 2.0 2.8 3.8 2.1 1.4 1.2 1.5 1.6 1.4 1.1 3.2" opacity="0.7"/><path d="M898.0,572.4 H988.0" stroke="#000" stroke-width="2.2" stroke-dasharray="2.1 1.6 3.0 1.3 2.0 1.1 2.7 3.6 1.2 3.2 2.6 1.6 1.4 2.3 2.7 1.1 2.2 2.6 1.7 2.6 2.7 1.3 2.7 1.8 2.5 3.5 1.0 3.5 3.0 1.6 0.7 1.0 2.9 0.6 2.8 1.1 2.4 0.9 1.0 2.9 0.8 1.8 2.8 3.0" opacity="0.7"/>
<path d="M136,75 V746" stroke="#ee8c1e" stroke-width="2.6" stroke-dasharray="7.6 4.21" fill="none"/>
<path d="M1013.6,74.5 V746" stroke="#e8a458" stroke-width="2.3" stroke-dasharray="17 3.24" fill="none"/>
<path d="M29,661.4 H1110" stroke="#e07800" stroke-width="3" stroke-dasharray="19.8 2.5 57.28 2.5 57.28 2.5" stroke-dashoffset="83.61" fill="none"/>
<rect x="28.2" y="74" width="1082" height="673" fill="none" stroke="#d9d9d9" stroke-width="2"/>
<path d="M28.5,75 H39.5 L28.5,85 Z" fill="#ff8c00"/>
<path d="M560.8,74.5 L569.8,84.6 L578.8,74.5" fill="none" stroke="#ff9a10" stroke-width="2.6"/>
<path d="M18.5,294.0 L27.5,301.8 L18.5,309.6 Z" fill="#3cff0a"/><path d="M12.6,314.7 V301.8 H19" fill="none" stroke="#3cff0a" stroke-width="2"/><path d="M5,315.3 H20 M7.3,318.8 H18 M10,322.0 H15" fill="none" stroke="#3cff0a" stroke-width="2"/><text x="0.70" y="308.80" font-size="22.94" font-weight="400" fill="#3cff0a" textLength="9.22" lengthAdjust="spacingAndGlyphs">2</text>
<path d="M18.5,513.4 L27.5,521.2 L18.5,529.0 Z" fill="#5a7cff"/><path d="M12.6,534.1 V521.2 H19" fill="none" stroke="#5a7cff" stroke-width="2"/><path d="M5,534.7 H20 M7.3,538.2 H18 M10,541.4 H15" fill="none" stroke="#5a7cff" stroke-width="2"/><text x="0.70" y="528.20" font-size="22.94" font-weight="400" fill="#5a7cff" textLength="9.22" lengthAdjust="spacingAndGlyphs">3</text>
<path d="M18.5,695.8 L27.5,703.6 L18.5,711.4 Z" fill="#f50a8e"/><path d="M12.6,716.5 V703.6 H19" fill="none" stroke="#f50a8e" stroke-width="2"/><path d="M5,717.1 H20 M7.3,720.6 H18 M10,723.8 H15" fill="none" stroke="#f50a8e" stroke-width="2"/><text x="0.70" y="710.60" font-size="23.27" font-weight="400" fill="#f50a8e" textLength="9.22" lengthAdjust="spacingAndGlyphs">4</text>
<text x="13.40" y="635.40" font-size="19.49" font-weight="400" fill="#f50a8e" textLength="12.02" lengthAdjust="spacingAndGlyphs">T</text>
<path d="M18,640.5 L27.2,647.4 L18,654.3 Z" fill="#f50a8e"/>
<rect x="1115.2" y="74.9" width="232.4" height="671.7" rx="9" ry="9" fill="#1a1a1a" stroke="#777" stroke-width="2"/>
<path d="M1127.8,107.1 L1132.4,105.7 L1136.2,99.3 L1138.7,94.4 L1141.2,90.1 L1142.2,89.6 L1143.7,90.5 L1146.1,95.1 L1148.2,100.7 L1150.4,105.7 L1153.2,105.7 L1156.0,100.7 L1158.8,94.4 L1161.7,86.6 L1164.8,82.5 L1168.0,85.9 L1170.5,92.2 L1172.6,99.3 L1175.8,105.7 L1177.2,106.4 L1179.3,101.4 L1181.1,96.5 L1182.5,94.5 L1184.3,96.5 L1186.4,102.1 L1188.5,106.0 L1185.7,108.5 L1182.1,112.7 L1178.6,118.4 L1174.4,123.5 L1170.8,118.4 L1168.7,112.7 L1166.6,109.2 L1164.5,107.8 L1162.0,109.2 L1159.5,113.4 L1156.7,119.8 L1153.9,126.8 L1151.4,130.5 L1149.0,126.8 L1146.1,119.1 L1144.0,112.7 L1141.9,108.5 L1140.1,107.1 L1137.7,109.2 L1135.9,114.1 L1133.8,118.5 L1131.7,115.5 L1129.2,109.9 Z" fill="#e8002a" stroke="#e8002a" stroke-width="0.6" stroke-linejoin="round"/>
<text x="1198.60" y="106.20" font-size="29.09" font-weight="700" fill="#ffffff" textLength="135.18" lengthAdjust="spacingAndGlyphs">KEYSIGHT</text>
<text x="1200.00" y="125.60" font-size="16.87" font-weight="700" fill="#f0f0f0" textLength="130.61" lengthAdjust="spacingAndGlyphs">TECHNOLOGIES</text>
<rect x="1116.2" y="138.4" width="230.4" height="37.3" fill="#0c0c0c"/><rect x="1116.2" y="141.4" width="230.4" height="31.8" fill="#5a5e61"/><path d="M1116.2,141.4 H1346.6 M1116.2,173.2 H1346.6" stroke="#8a8a8a" stroke-width="2.2"/><rect x="1122.3" y="152.0" width="2.4" height="2.4" fill="#d0d0d0"/><rect x="1122.3" y="157.0" width="2.4" height="2.4" fill="#d0d0d0"/><rect x="1122.3" y="162.0" width="2.4" height="2.4" fill="#d0d0d0"/><rect x="1127.3" y="152.0" width="2.4" height="2.4" fill="#d0d0d0"/><rect x="1127.3" y="157.0" width="2.4" height="2.4" fill="#d0d0d0"/><rect x="1127.3" y="162.0" width="2.4" height="2.4" fill="#d0d0d0"/><rect x="1332.3" y="152.0" width="2.4" height="2.4" fill="#d0d0d0"/><rect x="1332.3" y="157.0" width="2.4" height="2.4" fill="#d0d0d0"/><rect x="1332.3" y="162.0" width="2.4" height="2.4" fill="#d0d0d0"/><rect x="1337.3" y="152.0" width="2.4" height="2.4" fill="#d0d0d0"/><rect x="1337.3" y="157.0" width="2.4" height="2.4" fill="#d0d0d0"/><rect x="1337.3" y="162.0" width="2.4" height="2.4" fill="#d0d0d0"/><text x="1175.80" y="165.90" font-size="28.80" font-weight="400" fill="#e0e0e0" textLength="110.42" lengthAdjust="spacingAndGlyphs" stroke="#5a5e61" stroke-width="0.4">Acquisition</text>
<text x="1193.60" y="199.40" font-size="29.38" font-weight="400" fill="#e0e0e0" textLength="73.61" lengthAdjust="spacingAndGlyphs" stroke="#1a1a1a" stroke-width="0.4">Normal</text>
<text x="1177.60" y="233.20" font-size="28.82" font-weight="400" fill="#e0e0e0" textLength="104.61" lengthAdjust="spacingAndGlyphs" stroke="#1a1a1a" stroke-width="0.4">2.00GSa/s</text>
<rect x="1116.2" y="273.6" width="230.4" height="37.1" fill="#0c0c0c"/><rect x="1116.2" y="276.6" width="230.4" height="31.6" fill="#5a5e61"/><path d="M1116.2,276.6 H1346.6 M1116.2,308.2 H1346.6" stroke="#8a8a8a" stroke-width="2.2"/><rect x="1122.3" y="287.1" width="2.4" height="2.4" fill="#d0d0d0"/><rect x="1122.3" y="292.1" width="2.4" height="2.4" fill="#d0d0d0"/><rect x="1122.3" y="297.1" width="2.4" height="2.4" fill="#d0d0d0"/><rect x="1127.3" y="287.1" width="2.4" height="2.4" fill="#d0d0d0"/><rect x="1127.3" y="292.1" width="2.4" height="2.4" fill="#d0d0d0"/><rect x="1127.3" y="297.1" width="2.4" height="2.4" fill="#d0d0d0"/><rect x="1332.3" y="287.1" width="2.4" height="2.4" fill="#d0d0d0"/><rect x="1332.3" y="292.1" width="2.4" height="2.4" fill="#d0d0d0"/><rect x="1332.3" y="297.1" width="2.4" height="2.4" fill="#d0d0d0"/><rect x="1337.3" y="287.1" width="2.4" height="2.4" fill="#d0d0d0"/><rect x="1337.3" y="292.1" width="2.4" height="2.4" fill="#d0d0d0"/><rect x="1337.3" y="297.1" width="2.4" height="2.4" fill="#d0d0d0"/><text x="1186.80" y="301.00" font-size="28.96" font-weight="400" fill="#e0e0e0" textLength="87.20" lengthAdjust="spacingAndGlyphs" stroke="#5a5e61" stroke-width="0.4">Channels</text>
<text x="1122.10" y="335.20" font-size="29.96" font-weight="400" fill="#f0f000" textLength="25.09" lengthAdjust="spacingAndGlyphs" stroke="#1a1a1a" stroke-width="0.4">DC</text>
<text x="1277.10" y="335.20" font-size="29.53" font-weight="400" fill="#f0f000" textLength="61.91" lengthAdjust="spacingAndGlyphs" stroke="#1a1a1a" stroke-width="0.4">1.00:1</text>
<text x="1122.10" y="369.00" font-size="30.40" font-weight="400" fill="#3cff0a" textLength="25.09" lengthAdjust="spacingAndGlyphs" stroke="#1a1a1a" stroke-width="0.4">DC</text>
<text x="1277.10" y="369.00" font-size="29.96" font-weight="400" fill="#3cff0a" textLength="61.91" lengthAdjust="spacingAndGlyphs" stroke="#1a1a1a" stroke-width="0.4">10.0:1</text>
<text x="1122.10" y="402.90" font-size="29.82" font-weight="400" fill="#5a7cff" textLength="25.09" lengthAdjust="spacingAndGlyphs" stroke="#1a1a1a" stroke-width="0.4">DC</text>
<text x="1277.10" y="402.90" font-size="29.39" font-weight="400" fill="#5a7cff" textLength="61.91" lengthAdjust="spacingAndGlyphs" stroke="#1a1a1a" stroke-width="0.4">10.0:1</text>
<text x="1122.10" y="435.80" font-size="29.09" font-weight="400" fill="#f50a8e" textLength="25.09" lengthAdjust="spacingAndGlyphs" stroke="#1a1a1a" stroke-width="0.4">DC</text>
<text x="1277.10" y="435.80" font-size="28.67" font-weight="400" fill="#f50a8e" textLength="61.91" lengthAdjust="spacingAndGlyphs" stroke="#1a1a1a" stroke-width="0.4">10.0:1</text>
<rect x="1116.2" y="442.5" width="230.4" height="36.9" fill="#0c0c0c"/><rect x="1116.2" y="445.5" width="230.4" height="31.4" fill="#5a5e61"/><path d="M1116.2,445.5 H1346.6 M1116.2,476.9 H1346.6" stroke="#8a8a8a" stroke-width="2.2"/><rect x="1122.3" y="455.9" width="2.4" height="2.4" fill="#d0d0d0"/><rect x="1122.3" y="460.9" width="2.4" height="2.4" fill="#d0d0d0"/><rect x="1122.3" y="465.9" width="2.4" height="2.4" fill="#d0d0d0"/><rect x="1127.3" y="455.9" width="2.4" height="2.4" fill="#d0d0d0"/><rect x="1127.3" y="460.9" width="2.4" height="2.4" fill="#d0d0d0"/><rect x="1127.3" y="465.9" width="2.4" height="2.4" fill="#d0d0d0"/><rect x="1332.3" y="455.9" width="2.4" height="2.4" fill="#d0d0d0"/><rect x="1332.3" y="460.9" width="2.4" height="2.4" fill="#d0d0d0"/><rect x="1332.3" y="465.9" width="2.4" height="2.4" fill="#d0d0d0"/><rect x="1337.3" y="455.9" width="2.4" height="2.4" fill="#d0d0d0"/><rect x="1337.3" y="460.9" width="2.4" height="2.4" fill="#d0d0d0"/><rect x="1337.3" y="465.9" width="2.4" height="2.4" fill="#d0d0d0"/><text x="1192.40" y="469.70" font-size="29.53" font-weight="400" fill="#e0e0e0" textLength="77.81" lengthAdjust="spacingAndGlyphs" stroke="#5a5e61" stroke-width="0.4">Cursors</text>
<text x="1121.50" y="503.90" font-size="28.95" font-weight="400" fill="#e0e0e0" textLength="34.01" lengthAdjust="spacingAndGlyphs" stroke="#1a1a1a" stroke-width="0.4">ΔX:</text>
<text x="1186.20" y="537.50" font-size="28.80" font-weight="400" fill="#e0e0e0" textLength="153.00" lengthAdjust="spacingAndGlyphs" stroke="#1a1a1a" stroke-width="0.4">+16.240000us</text>
<path d="M1121.6,545 H1341.7 M1121.6,612.4 H1341.7" stroke="#8a8a8a" stroke-width="2"/>
<text x="1123.80" y="571.20" font-size="27.05" font-weight="400" fill="#e0e0e0" textLength="56.38" lengthAdjust="spacingAndGlyphs" stroke="#1a1a1a" stroke-width="0.4">1/ΔX:</text>
<text x="1215.80" y="604.80" font-size="26.91" font-weight="400" fill="#e0e0e0" textLength="123.40" lengthAdjust="spacingAndGlyphs" stroke="#1a1a1a" stroke-width="0.4">+61.576kHz</text>
<text x="1120.80" y="639.80" font-size="25.16" font-weight="400" fill="#e0e0e0" textLength="61.90" lengthAdjust="spacingAndGlyphs" stroke="#1a1a1a" stroke-width="0.4">ΔY(<tspan fill="#3cff0a">2</tspan>):</text>
<text x="1275.50" y="670.80" font-size="26.52" font-weight="400" fill="#e0e0e0" textLength="63.73" lengthAdjust="spacingAndGlyphs" stroke="#1a1a1a" stroke-width="0.4">+0.0V</text>
<text x="6.30" y="773.80" font-size="28.80" font-weight="400" fill="#e8e8e8" textLength="252.29" lengthAdjust="spacingAndGlyphs" stroke="#000000" stroke-width="0.4">Print Configuration Menu</text>
<defs><linearGradient id="gb" x1="0" y1="0" x2="0" y2="1"><stop offset="0" stop-color="#5e6266"/><stop offset="0.45" stop-color="#53575b"/><stop offset="0.7" stop-color="#383a3d"/><stop offset="1" stop-color="#262829"/></linearGradient></defs>
<rect x="12.4" y="784.5" width="211.6" height="62.5" rx="9" fill="url(#gb)" stroke="#2e3032" stroke-width="1.5"/>
<rect x="235.9" y="785" width="210.5" height="61.5" rx="9" fill="#1a1a1a" stroke="#4a4d50" stroke-width="2"/>
<rect x="458.6" y="785" width="210.3" height="61.5" rx="9" fill="#1a1a1a" stroke="#4a4d50" stroke-width="2"/>
<rect x="681.3" y="784.5" width="210.6" height="62.5" rx="9" fill="url(#gb)" stroke="#2e3032" stroke-width="1.5"/>
<rect x="1127.2" y="785" width="210.4" height="61.5" rx="9" fill="#1a1a1a" stroke="#4a4d50" stroke-width="2"/>
<path d="M33.10,792.88 A8.8,8.8 0 1 1 28.71,800.81" fill="none" stroke="#b0f800" stroke-width="5.5"/>
<path d="M25.9,792.8 L19.2,802.6 L32.6,802.6 Z" fill="#b0f800"/>
<text x="78.10" y="807.50" font-size="28.80" font-weight="400" fill="#e8e8e8" textLength="76.71" lengthAdjust="spacingAndGlyphs" stroke="#55595d" stroke-width="0.4">Print to</text>
<text x="48.50" y="839.60" font-size="28.67" font-weight="400" fill="#e8e8e8" textLength="8.52" lengthAdjust="spacingAndGlyphs">?</text>
<g fill="none" stroke="#e8e8e8" stroke-width="2.6"><rect x="68.6" y="820.2" width="6.2" height="4.2" rx="1.5"/><rect x="63.3" y="835.1" width="6.2" height="4.8" rx="1.5"/><rect x="74.1" y="835.1" width="6.2" height="4.8" rx="1.5"/><path d="M71.7,825 V830 M59.5,830 H84.3 M66.5,830 V834.5 M77,830 V834.5"/></g>
<text x="93.60" y="839.80" font-size="29.67" font-weight="400" fill="#e8e8e8" textLength="92.91" lengthAdjust="spacingAndGlyphs" stroke="#34373a" stroke-width="0.4">NETPRT0</text>
<path d="M256.51,792.16 A9.2,9.2 0 1 1 251.24,801.30" fill="none" stroke="#8a8a8a" stroke-width="2.2"/>
<path d="M248.90,794.8 L244.40,800.6 L253.40,800.6 Z" fill="#8a8a8a"/>
<path d="M479.51,792.16 A9.2,9.2 0 1 1 474.24,801.30" fill="none" stroke="#8a8a8a" stroke-width="2.2"/>
<path d="M471.90,794.8 L467.40,800.6 L476.40,800.6 Z" fill="#8a8a8a"/>
<text x="303.20" y="807.70" font-size="29.96" font-weight="400" fill="#8c8c8c" textLength="74.28" lengthAdjust="spacingAndGlyphs" stroke="#1a1a1a" stroke-width="0.4">Options</text>
<rect x="274.4" y="820" width="23.5" height="23.5" fill="none" stroke="#8a8a8a" stroke-width="2"/>
<text x="305.10" y="839.60" font-size="28.96" font-weight="400" fill="#8c8c8c" textLength="101.08" lengthAdjust="spacingAndGlyphs" stroke="#1a1a1a" stroke-width="0.4">Setup Info</text>
<text x="527.50" y="807.70" font-size="30.40" font-weight="400" fill="#8c8c8c" textLength="69.32" lengthAdjust="spacingAndGlyphs" stroke="#1a1a1a" stroke-width="0.4">Palette</text>
<text x="535.80" y="839.60" font-size="28.96" font-weight="400" fill="#8c8c8c" textLength="53.99" lengthAdjust="spacingAndGlyphs" stroke="#1a1a1a" stroke-width="0.4">Color</text>
<text x="708.00" y="807.70" font-size="30.25" font-weight="400" fill="#e8e8e8" textLength="153.97" lengthAdjust="spacingAndGlyphs" stroke="#55595d" stroke-width="0.4">Network Setup</text>
<path d="M774.5,822.2 H796.8 V829.8 H810.8 L786,842.5 L761,829.8 H774.5 Z" fill="#e8e8e8"/>
<text x="1189.20" y="807.70" font-size="29.53" font-weight="400" fill="#8c8c8c" textLength="83.01" lengthAdjust="spacingAndGlyphs" stroke="#1a1a1a" stroke-width="0.4">Press to</text>
<text x="1207.80" y="839.60" font-size="27.64" font-weight="400" fill="#8c8c8c" textLength="47.13" lengthAdjust="spacingAndGlyphs" stroke="#1a1a1a" stroke-width="0.4">Print</text>
<path d="M135.0,210.1 H1439" stroke="#ff0000" stroke-width="3" fill="none"/><path d="M1429,199.3 L1440,210.1 L1429,220.9" stroke="#ff0000" stroke-width="3" fill="none" stroke-linecap="round" stroke-linejoin="round"/>
<path d="M1014.0,270.2 H1439" stroke="#ff0000" stroke-width="3" fill="none"/><path d="M1429,259.4 L1440,270.2 L1429,281.0" stroke="#ff0000" stroke-width="3" fill="none" stroke-linecap="round" stroke-linejoin="round"/>
<path d="M254.0,417.0 H1439" stroke="#00b050" stroke-width="3" fill="none"/><path d="M1429,406.2 L1440,417.0 L1429,427.8" stroke="#00b050" stroke-width="3" fill="none" stroke-linecap="round" stroke-linejoin="round"/>
<path d="M516.0,499.8 H1439" stroke="#00b050" stroke-width="3" fill="none"/><path d="M1429,489.0 L1440,499.8 L1429,510.6" stroke="#00b050" stroke-width="3" fill="none" stroke-linecap="round" stroke-linejoin="round"/>
<path d="M632.0,598.0 H1439" stroke="#00b0f0" stroke-width="3" fill="none"/><path d="M1429,587.2 L1440,598.0 L1429,608.8" stroke="#00b0f0" stroke-width="3" fill="none" stroke-linecap="round" stroke-linejoin="round"/>
<path d="M893.0,680.5 H1439" stroke="#00b0f0" stroke-width="3" fill="none"/><path d="M1429,669.7 L1440,680.5 L1429,691.3" stroke="#00b0f0" stroke-width="3" fill="none" stroke-linecap="round" stroke-linejoin="round"/>
<text x="1455.70" y="220.20" font-size="31.13" font-weight="700" fill="#ff0000" textLength="329.39" lengthAdjust="spacingAndGlyphs">Lead Device: Sends data</text>
<text x="1455.70" y="279.20" font-size="30.55" font-weight="700" fill="#ff0000" textLength="367.72" lengthAdjust="spacingAndGlyphs">Lead Device: Receives data</text>
<text x="1454.70" y="406.70" font-size="30.25" font-weight="700" fill="#00b050" textLength="418.15" lengthAdjust="spacingAndGlyphs">Node Device #1: Receives data</text>
<text x="1453.80" y="446.80" font-size="29.24" font-weight="700" fill="#00b050" textLength="418.21" lengthAdjust="spacingAndGlyphs">and begins moving data for TX</text>
<text x="1454.70" y="509.40" font-size="30.25" font-weight="700" fill="#00b050" textLength="380.12" lengthAdjust="spacingAndGlyphs">Node Device #1: Sends data</text>
<text x="1454.60" y="587.60" font-size="29.96" font-weight="700" fill="#0070c0" textLength="418.45" lengthAdjust="spacingAndGlyphs">Node Device #2: Receives data</text>
<text x="1453.80" y="627.20" font-size="28.55" font-weight="700" fill="#0070c0" textLength="418.51" lengthAdjust="spacingAndGlyphs">and begins moving data for TX</text>
<text x="1454.60" y="690.20" font-size="30.11" font-weight="700" fill="#0070c0" textLength="379.82" lengthAdjust="spacingAndGlyphs">Node Device #2: Sends data</text>
</svg>
</body></html>
